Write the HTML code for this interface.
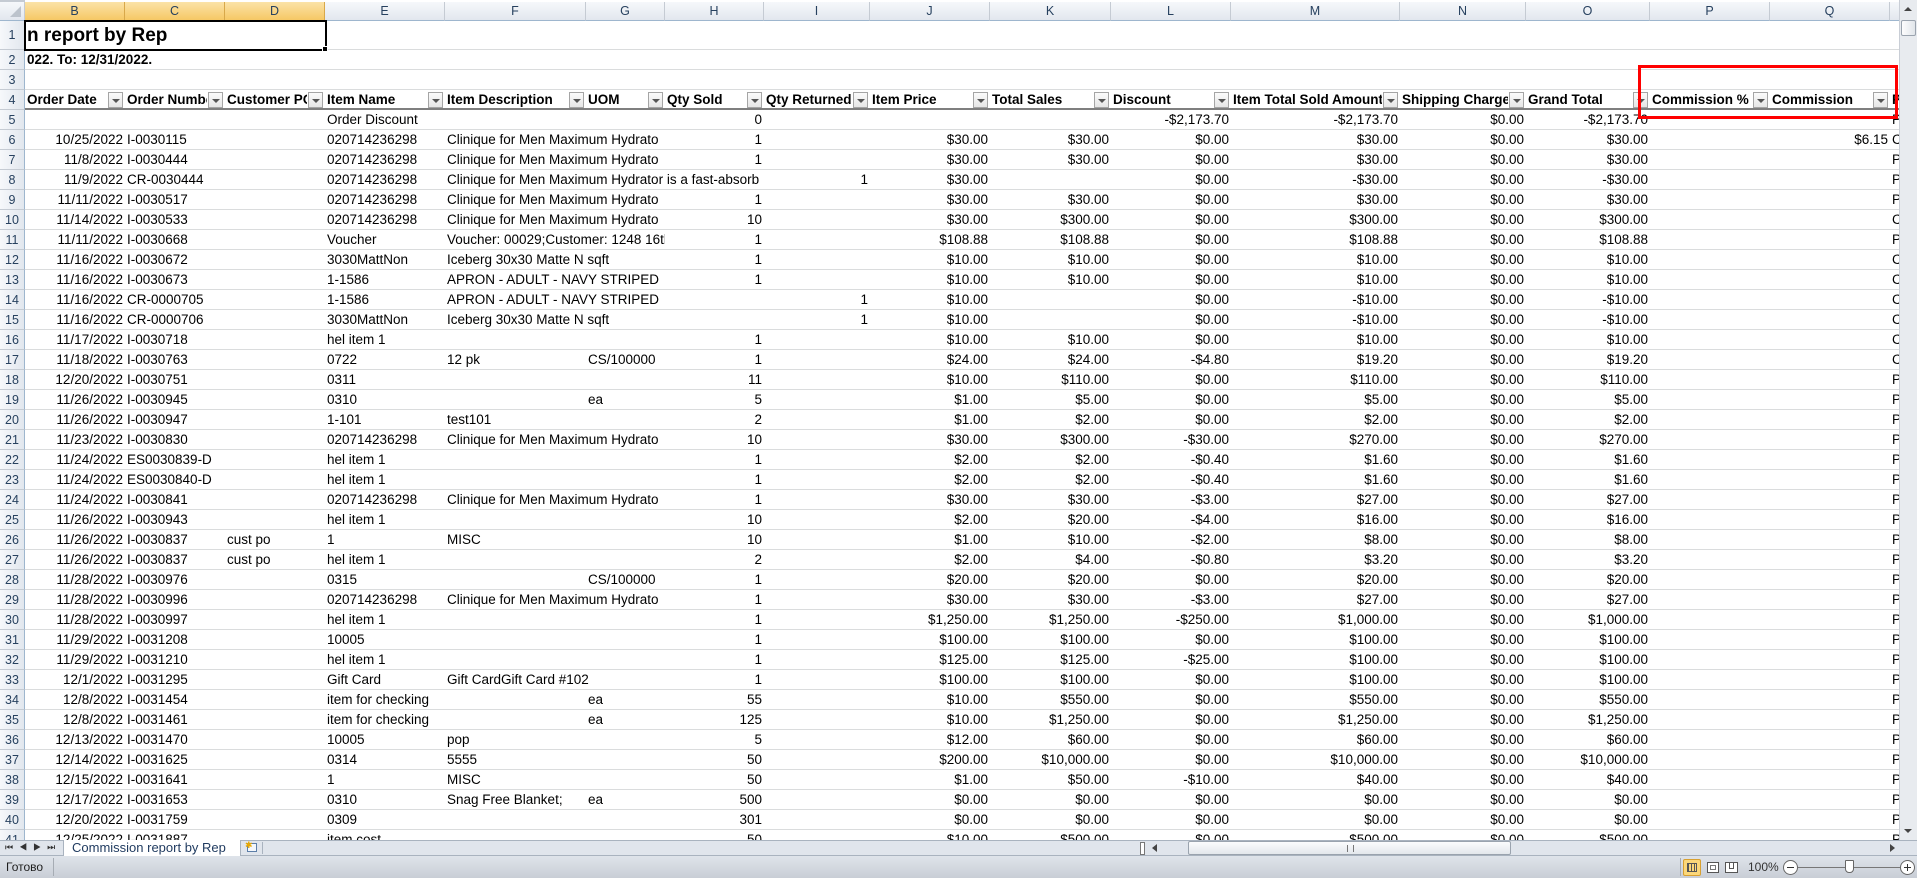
<!DOCTYPE html>
<html><head><meta charset="utf-8">
<style>
*{margin:0;padding:0;box-sizing:border-box}
body{width:1917px;height:878px;overflow:hidden;background:#fff;font-family:"Liberation Sans",sans-serif;font-size:13.5px;color:#000;position:relative}
.c{position:absolute;white-space:nowrap;overflow:hidden;line-height:20px;padding:0 3px}
.gv{position:absolute;width:1px;background:#dadcdd}
.gh{position:absolute;height:1px;background:#dadcdd}
.hd{position:absolute;background:linear-gradient(#f6f8fb,#e2e7ee);color:#27415f;text-align:center;border-right:1px solid #c5cbd3;border-bottom:1px solid #9eb6ce;font-size:12.5px}
.hs{background:linear-gradient(#fbe3a8,#f6c865);border-right:1px solid #d8a84a;border-bottom:1px solid #d8a84a}
.rh{position:absolute;left:0;width:25px;background:linear-gradient(90deg,#f6f8fb,#e2e7ee);color:#27415f;text-align:center;border-right:1px solid #9eb6ce;border-bottom:1px solid #c5cbd3;font-size:12.5px}
.fb{position:absolute;width:15px;height:16px;border:1px solid #a5a5a5;background:linear-gradient(#fbfbfb,#e6e6e6)}
.fb:after{content:"";position:absolute;left:3px;top:6px;border-left:4px solid transparent;border-right:4px solid transparent;border-top:4px solid #555}
.r{text-align:right}
.b{font-weight:bold}
</style></head><body>
<div id="g"></div>
<script>
var X=[25,125,225,325,445,586,665,764,870,990,1111,1231,1400,1526,1650,1770,1890,1990];
var L="BCDEFGHIJKLMNOPQR";
var g=document.getElementById('g'),h='';
function rt(n){return n==1?21:n==2?50:n==3?70:90+20*(n-4);}
function rb(n){return n==1?50:rt(n)+20;}
var D={
5:["","","","Order Discount","","","0","","","","-$2,173.70","-$2,173.70","$0.00","-$2,173.70","","","P"],
6:["10/25/2022","I-0030115","","020714236298","Clinique for Men Maximum Hydrato","","1","","$30.00","$30.00","$0.00","$30.00","$0.00","$30.00","","$6.15","C"],
7:["11/8/2022","I-0030444","","020714236298","Clinique for Men Maximum Hydrato","","1","","$30.00","$30.00","$0.00","$30.00","$0.00","$30.00","","","P"],
8:["11/9/2022","CR-0030444","","020714236298","Clinique for Men Maximum Hydrator is a fast-absorb","","","1","$30.00","","$0.00","-$30.00","$0.00","-$30.00","","","P"],
9:["11/11/2022","I-0030517","","020714236298","Clinique for Men Maximum Hydrato","","1","","$30.00","$30.00","$0.00","$30.00","$0.00","$30.00","","","P"],
10:["11/14/2022","I-0030533","","020714236298","Clinique for Men Maximum Hydrato","","10","","$30.00","$300.00","$0.00","$300.00","$0.00","$300.00","","","C"],
11:["11/11/2022","I-0030668","","Voucher","Voucher: 00029;Customer: 1248 16th","","1","","$108.88","$108.88","$0.00","$108.88","$0.00","$108.88","","","P"],
12:["11/16/2022","I-0030672","","3030MattNon","Iceberg 30x30 Matte N sqft","","1","","$10.00","$10.00","$0.00","$10.00","$0.00","$10.00","","","C"],
13:["11/16/2022","I-0030673","","1-1586","APRON - ADULT - NAVY STRIPED","","1","","$10.00","$10.00","$0.00","$10.00","$0.00","$10.00","","","C"],
14:["11/16/2022","CR-0000705","","1-1586","APRON - ADULT - NAVY STRIPED","","","1","$10.00","","$0.00","-$10.00","$0.00","-$10.00","","","C"],
15:["11/16/2022","CR-0000706","","3030MattNon","Iceberg 30x30 Matte N sqft","","","1","$10.00","","$0.00","-$10.00","$0.00","-$10.00","","","C"],
16:["11/17/2022","I-0030718","","hel item 1","","","1","","$10.00","$10.00","$0.00","$10.00","$0.00","$10.00","","","C"],
17:["11/18/2022","I-0030763","","0722","12 pk","CS/100000","1","","$24.00","$24.00","-$4.80","$19.20","$0.00","$19.20","","","C"],
18:["12/20/2022","I-0030751","","0311","","","11","","$10.00","$110.00","$0.00","$110.00","$0.00","$110.00","","","P"],
19:["11/26/2022","I-0030945","","0310","","ea","5","","$1.00","$5.00","$0.00","$5.00","$0.00","$5.00","","","P"],
20:["11/26/2022","I-0030947","","1-101","test101","","2","","$1.00","$2.00","$0.00","$2.00","$0.00","$2.00","","","P"],
21:["11/23/2022","I-0030830","","020714236298","Clinique for Men Maximum Hydrato","","10","","$30.00","$300.00","-$30.00","$270.00","$0.00","$270.00","","","P"],
22:["11/24/2022","ES0030839-D","","hel item 1","","","1","","$2.00","$2.00","-$0.40","$1.60","$0.00","$1.60","","","P"],
23:["11/24/2022","ES0030840-D","","hel item 1","","","1","","$2.00","$2.00","-$0.40","$1.60","$0.00","$1.60","","","P"],
24:["11/24/2022","I-0030841","","020714236298","Clinique for Men Maximum Hydrato","","1","","$30.00","$30.00","-$3.00","$27.00","$0.00","$27.00","","","P"],
25:["11/26/2022","I-0030943","","hel item 1","","","10","","$2.00","$20.00","-$4.00","$16.00","$0.00","$16.00","","","P"],
26:["11/26/2022","I-0030837","cust po","1","MISC","","10","","$1.00","$10.00","-$2.00","$8.00","$0.00","$8.00","","","P"],
27:["11/26/2022","I-0030837","cust po","hel item 1","","","2","","$2.00","$4.00","-$0.80","$3.20","$0.00","$3.20","","","P"],
28:["11/28/2022","I-0030976","","0315","","CS/100000","1","","$20.00","$20.00","$0.00","$20.00","$0.00","$20.00","","","P"],
29:["11/28/2022","I-0030996","","020714236298","Clinique for Men Maximum Hydrato","","1","","$30.00","$30.00","-$3.00","$27.00","$0.00","$27.00","","","P"],
30:["11/28/2022","I-0030997","","hel item 1","","","1","","$1,250.00","$1,250.00","-$250.00","$1,000.00","$0.00","$1,000.00","","","P"],
31:["11/29/2022","I-0031208","","10005","","","1","","$100.00","$100.00","$0.00","$100.00","$0.00","$100.00","","","P"],
32:["11/29/2022","I-0031210","","hel item 1","","","1","","$125.00","$125.00","-$25.00","$100.00","$0.00","$100.00","","","P"],
33:["12/1/2022","I-0031295","","Gift Card","Gift CardGift Card  #102","","1","","$100.00","$100.00","$0.00","$100.00","$0.00","$100.00","","","P"],
34:["12/8/2022","I-0031454","","item for checking","","ea","55","","$10.00","$550.00","$0.00","$550.00","$0.00","$550.00","","","P"],
35:["12/8/2022","I-0031461","","item for checking","","ea","125","","$10.00","$1,250.00","$0.00","$1,250.00","$0.00","$1,250.00","","","P"],
36:["12/13/2022","I-0031470","","10005","pop","","5","","$12.00","$60.00","$0.00","$60.00","$0.00","$60.00","","","P"],
37:["12/14/2022","I-0031625","","0314","5555","","50","","$200.00","$10,000.00","$0.00","$10,000.00","$0.00","$10,000.00","","","P"],
38:["12/15/2022","I-0031641","","1","MISC","","50","","$1.00","$50.00","-$10.00","$40.00","$0.00","$40.00","","","P"],
39:["12/17/2022","I-0031653","","0310","Snag Free Blanket;","ea","500","","$0.00","$0.00","$0.00","$0.00","$0.00","$0.00","","","P"],
40:["12/20/2022","I-0031759","","0309","","","301","","$0.00","$0.00","$0.00","$0.00","$0.00","$0.00","","","P"],
41:["12/25/2022","I-0031887","","item cost","","","50","","$10.00","$500.00","$0.00","$500.00","$0.00","$500.00","","","P"]
};
var HD=["Order Date","Order Numbe","Customer PO","Item Name","Item Description","UOM","Qty Sold","Qty Returned","Item Price","Total Sales","Discount","Item Total Sold Amount","Shipping Charge","Grand Total","Commission %","Commission","P"];
var BOT=840;
for(var i=1;i<X.length-1;i++){var top=(i==2||i==3)?50:21; h+='<div class="gv" style="left:'+(X[i]-1)+'px;top:'+top+'px;height:'+(BOT-top)+'px"></div>';}
for(var n=1;n<=41;n++){h+='<div class="gh" style="left:25px;top:'+(rb(n)-1)+'px;width:1875px"></div>';}
h+='<div style="position:absolute;left:25px;top:108px;width:1875px;height:2px;background:#7f7f7f"></div>';
h+='<div class="hd" style="left:0;top:0;width:25px;height:21px;border-top:2px solid #c5cbd3"><div style="position:absolute;right:3px;bottom:3px;border-left:11px solid transparent;border-bottom:11px solid #bcc3cc"></div></div>';
for(var i=0;i<L.length;i++){var w=X[i+1]-X[i];var s=(i<3)?' hs':'';h+='<div class="hd'+s+'" style="left:'+X[i]+'px;top:2px;width:'+w+'px;height:19px;line-height:18px">'+L[i]+'</div>';}
for(var n=1;n<=41;n++){var t=rt(n),hh=rb(n)-t;h+='<div class="rh'+(n==1?' hs':'')+'" style="top:'+t+'px;height:'+hh+'px;line-height:'+hh+'px">'+n+'</div>';}
h+='<div class="c b" style="left:25px;top:21px;width:300px;height:29px;line-height:30px;font-size:19px;padding:0 0 0 2px">n report by Rep</div>';
h+='<div class="c b" style="left:25px;top:50px;width:300px;height:20px;font-size:13.5px;padding:0 0 0 2px">022. To: 12/31/2022.</div>';
h+='<div style="position:absolute;left:24px;top:20px;width:303px;height:31px;border:2px solid #000"></div><div style="position:absolute;left:322px;top:46px;width:6px;height:6px;background:#000;border:1px solid #fff"></div>';
for(var i=0;i<HD.length;i++){var w=X[i+1]-X[i];var ww=(i==16)?w:w-18;h+='<div class="c b" style="left:'+X[i]+'px;top:90px;width:'+ww+'px;height:20px;padding:0 2px">'+HD[i]+'</div>';if(i<16)h+='<div class="fb" style="left:'+(X[i+1]-17)+'px;top:92px"></div>';}
var RA={0:1,6:1,7:1,8:1,9:1,10:1,11:1,12:1,13:1,14:1,15:1};
for(var n=5;n<=41;n++){var d=D[n];for(var i=0;i<d.length;i++){if(!d[i])continue;var l=X[i],w=X[i+1]-X[i];
if(!RA[i]){var j=i+1;while(j<d.length&&!d[j]){j++;}w=X[Math.min(j,X.length-1)]-l;if(i==16)w=30;}
h+='<div class="c'+(RA[i]?' r':'')+'" style="left:'+l+'px;top:'+rt(n)+'px;width:'+w+'px;height:19px;'+(RA[i]?'padding:0 2px 0 0':'padding:0 0 0 2px')+'">'+d[i]+'</div>';}}
h+='<div style="position:absolute;left:1638px;top:65px;width:260px;height:54px;border:3px solid #f00"></div>';
h+='<div style="position:absolute;left:1899px;top:0;width:18px;height:840px;background:#e8ebef;border-left:1px solid #c9ced6"><div style="position:absolute;left:4px;top:7px;border-left:4px solid transparent;border-right:4px solid transparent;border-bottom:4px solid #444"></div><div style="position:absolute;left:1px;top:20px;width:15px;height:16px;border:1px solid #9aa3ae;background:linear-gradient(90deg,#fdfdfd,#e1e5ea);border-radius:2px"></div><div style="position:absolute;left:4px;top:829px;border-left:4px solid transparent;border-right:4px solid transparent;border-top:4px solid #444"></div></div>';
h+='<div style="position:absolute;left:0;top:840px;width:1917px;height:16px;background:#e0e5ec;border-top:1px solid #a9b3bf;border-bottom:1px solid #a9b3bf"></div>';
h+='<div style="position:absolute;left:5px;top:840px;font-size:9px;color:#333;line-height:15px;letter-spacing:6px">⏮◀▶⏭</div>';
h+='<div style="position:absolute;left:63px;top:840px;width:178px;height:16px;background:#fff;border-left:1px solid #a9b3bf;border-right:1px solid #a9b3bf;color:#1f3a5f;font-size:13px;line-height:15px;padding-left:8px">Commission report by Rep</div>';
h+='<div style="position:absolute;left:243px;top:842px;width:20px;height:12px;border-right:1px solid #a9b3bf"><div style="position:absolute;left:4px;top:1px;width:10px;height:9px;border:1px solid #5c7ea8;background:#f4f7fb"></div><div style="position:absolute;left:2px;top:-2px;color:#e8a800;font-size:9px">✱</div></div>';
h+='<div style="position:absolute;left:1140px;top:842px;width:5px;height:13px;border:1px solid #777;background:#fff"></div>';
h+='<div style="position:absolute;left:1152px;top:844px;border-top:4px solid transparent;border-bottom:4px solid transparent;border-right:5px solid #444"></div>';
h+='<div style="position:absolute;left:1188px;top:841px;width:323px;height:14px;border:1px solid #9aa3ae;border-radius:2px;background:linear-gradient(#fbfcfd,#e3e7ec)"><div style="position:absolute;left:158px;top:3px;width:7px;height:7px;border-left:1px solid #777;border-right:1px solid #777"></div></div>';
h+='<div style="position:absolute;left:1890px;top:844px;border-top:4px solid transparent;border-bottom:4px solid transparent;border-left:5px solid #444"></div>';
h+='<div style="position:absolute;left:0;top:856px;width:1917px;height:22px;background:linear-gradient(#dfe4ea,#c9ced6)"></div>';
h+='<div style="position:absolute;left:6px;top:856px;line-height:22px;font-size:12px;color:#1e1e1e">Готово</div><div style="position:absolute;left:53px;top:858px;width:1px;height:18px;background:#a6acb4"></div>';
h+='<div style="position:absolute;left:1680px;top:858px;width:1px;height:18px;background:#a6acb4"></div>';
h+='<div style="position:absolute;left:1683px;top:859px;width:18px;height:17px;background:#fbd77a;border:1px solid #d8a030;border-radius:2px"><div style="position:absolute;left:3px;top:3px;width:10px;height:9px;border:1px solid #555;background:repeating-linear-gradient(90deg,#555 0 1px,transparent 1px 3px)"></div></div>';
h+='<div style="position:absolute;left:1707px;top:862px;width:12px;height:11px;border:1px solid #555;background:#fff"><div style="margin:2px;height:5px;border:1px solid #777"></div></div>';
h+='<div style="position:absolute;left:1725px;top:862px;width:13px;height:11px;border:1px solid #555;background:#fff"><div style="position:absolute;left:3px;top:0;width:5px;height:6px;border:1px solid #555;border-top:none"></div></div>';
h+='<div style="position:absolute;left:1748px;top:856px;line-height:22px;font-size:12px;color:#333">100%</div>';
h+='<div style="position:absolute;left:1783px;top:860px;width:15px;height:15px;border:1px solid #666;border-radius:50%;background:#fff"><div style="position:absolute;left:3px;top:6px;width:7px;height:1px;background:#333"></div></div>';
h+='<div style="position:absolute;left:1798px;top:867px;width:102px;height:1px;background:#777"></div>';
h+='<div style="position:absolute;left:1845px;top:860px;width:9px;height:13px;background:#fff;border:1px solid #666;border-radius:1px 1px 4px 4px"></div>';
h+='<div style="position:absolute;left:1900px;top:860px;width:15px;height:15px;border:1px solid #666;border-radius:50%;background:#fff"><div style="position:absolute;left:3px;top:6px;width:7px;height:1px;background:#333"></div><div style="position:absolute;left:6px;top:3px;width:1px;height:7px;background:#333"></div></div>';
g.innerHTML=h;
</script>
</body></html>
